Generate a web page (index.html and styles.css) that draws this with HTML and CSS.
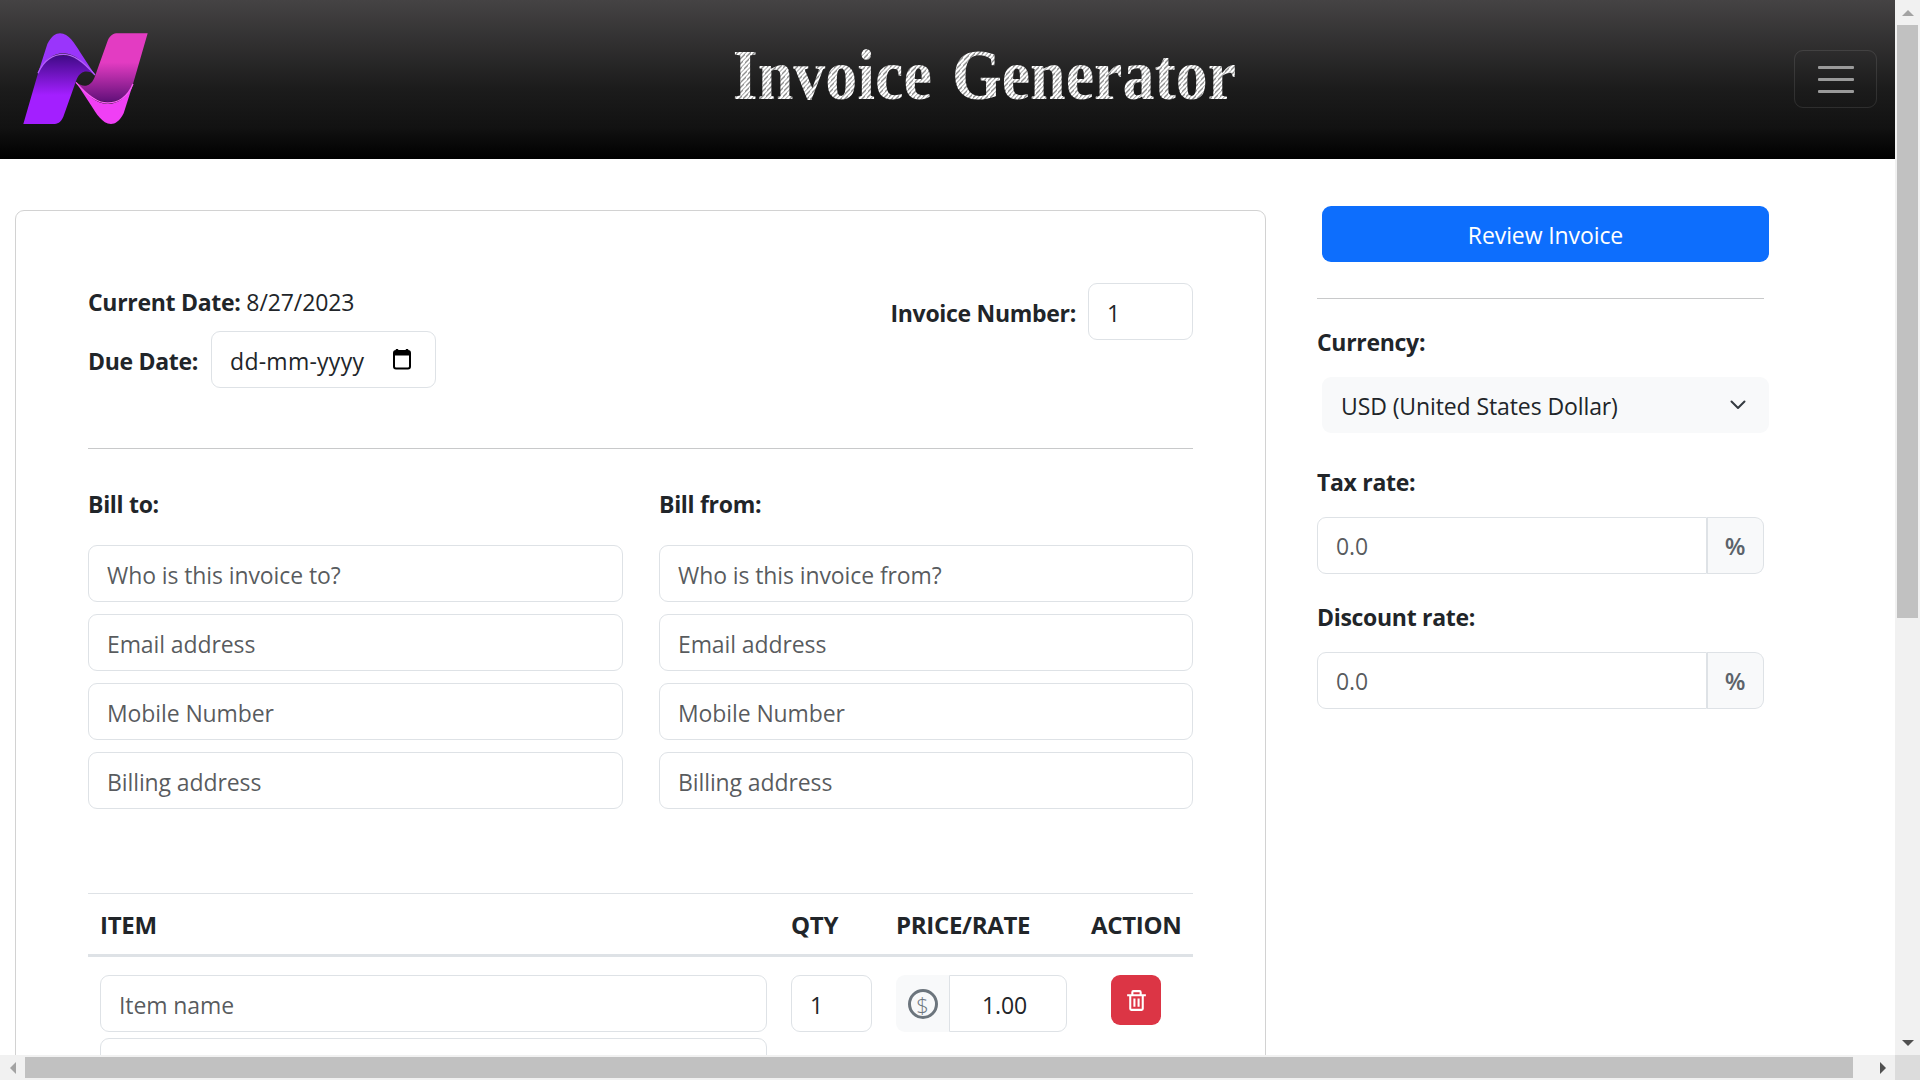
FILE: index.html
```html
<!DOCTYPE html>
<html lang="en">
<head>
<meta charset="utf-8">
<title>Invoice Generator</title>
<link rel="stylesheet" href="styles.css">
</head>
<body>
<div class="window">
  <div class="viewport">
    <header class="topbar">
      <svg class="logo" viewBox="0 0 450 360" aria-label="Logo">
        <defs>
          <linearGradient id="pFront" gradientUnits="userSpaceOnUse" x1="0" y1="105" x2="0" y2="225">
            <stop offset="0" stop-color="#3f0a85"/><stop offset="1" stop-color="#a31fff"/>
          </linearGradient>
          <linearGradient id="mFront" gradientUnits="userSpaceOnUse" x1="0" y1="105" x2="0" y2="225">
            <stop offset="0" stop-color="#5f0f78"/><stop offset="1" stop-color="#e33cc2"/>
          </linearGradient>
        </defs>
        <path fill="#9a35fb" d="M84 160 L112 72 C124 48 138 40 150 40 C176 40 195 72 210 96 L255 165 C225 130 195 100 160 100 C130 100 100 120 84 160 Z"/>
        <path fill="url(#pFront)" d="M40 312 L84 160 C100 122 130 106 160 106 C195 106 225 132 255 165 C232 148 212 152 200 178 L160 290 C152 308 142 312 130 312 Z"/>
        <path fill="none" stroke="#b45cff" stroke-width="4" d="M84 160 C100 120 130 103 160 103 C195 103 225 130 255 165"/>
        <g transform="rotate(180 226.5 176)">
          <path fill="#f03ff5" d="M84 160 L112 72 C124 48 138 40 150 40 C176 40 195 72 210 96 L255 165 C225 130 195 100 160 100 C130 100 100 120 84 160 Z"/>
          <path fill="url(#mFront)" d="M40 312 L84 160 C100 122 130 106 160 106 C195 106 225 132 255 165 C232 148 212 152 200 178 L160 290 C152 308 142 312 130 312 Z"/>
          <path fill="none" stroke="#fb5cf8" stroke-width="4" d="M84 160 C100 120 130 103 160 103 C195 103 225 130 255 165"/>
        </g>
      </svg>
      <h1 class="brand-title">Invoice Generator</h1>
      <button class="toggler" type="button" aria-label="Toggle navigation">
        <span class="toggler-bar"></span><span class="toggler-bar"></span><span class="toggler-bar"></span>
      </button>
    </header>

    <main class="layout">
      <section class="card">
        <div class="meta-row">
          <div class="meta-dates">
            <div class="current-date"><strong>Current Date:</strong> 8/27/2023</div>
            <div class="inline-field">
              <strong>Due Date:</strong>
              <div class="control date-control"><span class="date-text">dd-mm-yyyy</span>
                <svg class="calendar" viewBox="0 0 20 22"><path d="M5 1v3M15 1v3" stroke="#000" stroke-width="2.4" fill="none"/><rect x="2" y="3" width="16" height="17.5" rx="2" fill="none" stroke="#000" stroke-width="2"/><rect x="2" y="3" width="16" height="4.5" fill="#000"/></svg>
              </div>
            </div>
          </div>
          <div class="inline-field">
            <strong>Invoice Number:</strong>
            <input class="control invoice-no" type="text" value="1">
          </div>
        </div>

        <hr class="rule meta-rule">

        <div class="parties">
          <div class="party">
            <strong class="party-title">Bill to:</strong>
            <input class="control" type="text" placeholder="Who is this invoice to?">
            <input class="control" type="text" placeholder="Email address">
            <input class="control" type="text" placeholder="Mobile Number">
            <input class="control" type="text" placeholder="Billing address">
          </div>
          <div class="party">
            <strong class="party-title">Bill from:</strong>
            <input class="control" type="text" placeholder="Who is this invoice from?">
            <input class="control" type="text" placeholder="Email address">
            <input class="control" type="text" placeholder="Mobile Number">
            <input class="control" type="text" placeholder="Billing address">
          </div>
        </div>

        <table class="items">
          <colgroup><col class="col-item"><col class="col-qty"><col class="col-price"><col class="col-action"></colgroup>
          <thead>
            <tr><th>ITEM</th><th>QTY</th><th>PRICE/RATE</th><th>ACTION</th></tr>
          </thead>
          <tbody>
            <tr>
              <td>
                <input class="control" type="text" placeholder="Item name">
                <input class="control item-desc" type="text">
              </td>
              <td><input class="control" type="text" value="1"></td>
              <td>
                <div class="group">
                  <span class="addon dollar-addon"><span class="dollar">$</span></span>
                  <input class="control group-input price-input" type="text" value="1.00">
                </div>
              </td>
              <td>
                <button class="delete" type="button" aria-label="Delete item">
                  <svg class="trash" viewBox="0 0 24 24" fill="#fff"><path d="M5 20a2 2 0 0 0 2 2h10a2 2 0 0 0 2-2V8h2V6h-4V4a2 2 0 0 0-2-2H9a2 2 0 0 0-2 2v2H3v2h2zM9 4h6v2H9zM8 8h9v12H7V8z"/><path d="M9 10h2v8H9zm4 0h2v8h-2z"/></svg>
                </button>
              </td>
            </tr>
          </tbody>
        </table>
      </section>

      <aside class="sidebar">
        <button class="primary" type="button">Review Invoice</button>
        <hr class="rule side-rule">
        <label class="side-label currency-label">Currency:</label>
        <div class="select-box"><span>USD (United States Dollar)</span>
          <svg class="chevron" viewBox="0 0 16 10"><path d="M1.5 1.5 8 8l6.5-6.5" fill="none" stroke="#343a40" stroke-width="2" stroke-linecap="round" stroke-linejoin="round"/></svg>
        </div>
        <label class="side-label tax-label">Tax rate:</label>
        <div class="group">
          <input class="control group-input-left" type="text" placeholder="0.0">
          <span class="addon percent">%</span>
        </div>
        <label class="side-label discount-label">Discount rate:</label>
        <div class="group">
          <input class="control group-input-left" type="text" placeholder="0.0">
          <span class="addon percent">%</span>
        </div>
      </aside>
    </main>
  </div>

  <div class="vbar">
    <div class="arrow-box"><span class="tri tri-up"></span></div>
    <div class="vthumb"></div>
    <div class="arrow-box arrow-end"><span class="tri tri-down"></span></div>
  </div>
  <div class="hbar">
    <div class="arrow-box"><span class="tri tri-left"></span></div>
    <div class="hthumb"></div>
    <div class="arrow-box arrow-end"><span class="tri tri-right"></span></div>
  </div>
  <div class="corner"></div>
</div>
</body>
</html>
```
FILE: styles.css
```css
* { box-sizing: border-box; }
html, body { margin: 0; height: 100%; overflow: hidden; }
body {
  font-family: "Open Sans", "Noto Sans", sans-serif;
  font-stretch: 92%;
  font-size: 23px;
  line-height: 36px;
  letter-spacing: -.1px;
  color: #212529;
  background: #fff;
}
strong { font-weight: 700; letter-spacing: -.3px; }

.window {
  display: grid;
  grid-template-columns: 1895px 25px;
  grid-template-rows: 1055px 25px;
  height: 100vh;
  overflow: hidden;
}
.viewport { overflow: hidden; }

/* header */
.topbar {
  height: 159px;
  display: flex;
  align-items: center;
  justify-content: space-between;
  padding: 0 18px 0 10px;
  background: linear-gradient(180deg, #454344 0%, #1c1c1c 55%, #121212 80%, #000 100%);
}
.logo { width: 150px; height: 120px; flex: none; }
.brand-title {
  margin: 0 0 10px 15px;
  font-family: "Liberation Serif", serif;
  font-stretch: normal;
  font-weight: 700;
  font-size: 64px;
  line-height: 80px;
  letter-spacing: 0;
  word-spacing: 4px;
  color: #fff;
  background: repeating-linear-gradient(135deg, #fff 0 2px, #8f8f8f 2px 3px);
  -webkit-background-clip: text;
  background-clip: text;
  -webkit-text-fill-color: transparent;
  transform: scaleY(1.13);
}
.toggler {
  width: 83px;
  height: 58px;
  margin-top: -1px;
  display: flex;
  flex-direction: column;
  align-items: center;
  justify-content: center;
  gap: 9px;
  padding: 0;
  background: transparent;
  border: 1px solid rgba(255, 255, 255, .1);
  border-radius: 9px;
}
.toggler-bar { width: 36px; height: 3px; background: #9a9a9a; border-radius: 1px; }

/* layout */
.layout {
  display: flex;
  align-items: flex-start;
  padding: 47px 0 0 15px;
}
.card {
  width: 1251px;
  flex: none;
  margin-top: 4px;
  padding: 72px 72px 48px;
  border: 1px solid #d2d2d2;
  border-radius: 9px;
}
.sidebar {
  width: 447px;
  flex: none;
  margin-left: 51px;
  display: flex;
  flex-direction: column;
  align-items: stretch;
}

/* controls */
.control {
  display: block;
  width: 100%;
  height: 57px;
  padding: 2px 18px 0;
  font: inherit;
  letter-spacing: inherit;
  color: #212529;
  background: #fff;
  border: 1px solid #dee2e6;
  border-radius: 9px;
  outline: none;
}
.control::placeholder { color: rgba(33, 37, 41, .75); opacity: 1; }

.meta-row { display: flex; justify-content: space-between; align-items: flex-start; }
.current-date { padding-top: 1px; margin-bottom: 11px; }
.inline-field { display: flex; align-items: center; gap: 12px; }
.inline-field strong { padding-top: 3px; }
.date-control {
  width: 225px;
  margin-left: 1px;
  display: flex;
  align-items: center;
  justify-content: space-between;
  padding-right: 23px;
}
.date-text { letter-spacing: .25px; }
.calendar { width: 20px; height: 22px; flex: none; margin-top: -3px; }
.invoice-no { width: 105px; }

.rule { margin: 0; border: 0; border-top: 1px solid #c8c9ca; }
.meta-rule { margin-top: 60px; }

.parties { display: grid; grid-template-columns: 535px 534px; column-gap: 36px; margin-top: 37px; }
.party { display: flex; flex-direction: column; gap: 12px; }
.party-title { display: block; margin-bottom: 11px; }

/* table */
.items {
  width: 1105px;
  margin-top: 84px;
  table-layout: fixed;
  border-collapse: collapse;
}
.col-item { width: 691px; }
.col-qty { width: 105px; }
.col-price { width: 195px; }
.col-action { width: 114px; }
.items th {
  height: 62px;
  padding: 2px 12px 0;
  text-align: left;
  font-size: 24px;
  font-weight: 700;
  letter-spacing: -.3px;
  border-top: 1px solid #dee2e6;
  border-bottom: 3px solid #dee2e6;
}
.items td { padding: 18px 12px 0; vertical-align: top; }
.item-desc { margin-top: 6px; }

/* input group */
.group { display: flex; width: 100%; }
.addon {
  display: flex;
  align-items: center;
  justify-content: center;
  flex: none;
  background: #f8f9fa;
  border: 1px solid #dee2e6;
}
.dollar-addon { width: 53px; border: 0; border-radius: 9px 0 0 9px; }
.dollar {
  width: 30px;
  height: 30px;
  display: flex;
  align-items: center;
  justify-content: center;
  border: 3px solid #6c757d;
  border-radius: 50%;
  font-size: 22px;
  font-weight: 300;
  line-height: 1;
  letter-spacing: 0;
  color: #6c757d;
}
.group-input { flex: 1; min-width: 0; border-radius: 0 9px 9px 0; }
.price-input { padding-left: 32px; }
.group-input-left { flex: 1; min-width: 0; padding-top: 0; border-radius: 9px 0 0 9px; }
.percent {
  width: 57px;
  border-left: 0;
  box-shadow: inset 1px 0 0 #dee2e6;
  border-radius: 0 9px 9px 0;
  font-size: 24px;
  font-weight: 600;
  color: #5c636a;
}

.delete {
  width: 50px;
  height: 50px;
  margin-left: 20px;
  display: flex;
  align-items: center;
  justify-content: center;
  padding: 0;
  background: #dc3545;
  border: 0;
  border-radius: 9px;
}
.trash { width: 25px; height: 25px; }

/* sidebar */
.primary {
  width: 447px;
  height: 56px;
  margin-left: 5px;
  padding: 2px 0 0;
  font: inherit;
  letter-spacing: inherit;
  color: #fff;
  background: #0d6efd;
  border: 0;
  border-radius: 9px;
}
.side-rule { margin-top: 36px; }
.side-label { display: block; font-weight: 700; letter-spacing: -.3px; margin-bottom: 17px; }
.currency-label { margin-top: 25px; }
.tax-label { margin-top: 31px; }
.discount-label { margin-top: 25px; }
.select-box {
  width: 447px;
  height: 56px;
  margin-left: 5px;
  display: flex;
  align-items: center;
  justify-content: space-between;
  padding: 2px 23px 0 19px;
  background: #f8f9fa;
  border-radius: 9px;
}
.chevron { width: 16px; height: 10px; flex: none; margin-top: -2px; }

/* scrollbars */
.vbar { display: flex; flex-direction: column; background: #f1f1f1; }
.hbar { display: flex; background: #f1f1f1; }
.arrow-box { width: 25px; height: 25px; flex: none; display: flex; align-items: center; justify-content: center; }
.arrow-end { margin-left: auto; margin-top: auto; }
.vthumb { height: 593px; margin: 0 2px; background: #c1c1c1; flex: none; }
.hthumb { width: 1828px; margin: 2px 0; background: #c1c1c1; flex: none; }
.corner { background: #dcdcdc; }
.tri { width: 0; height: 0; border-style: solid; border-color: transparent; }
.tri-up { border-width: 0 6px 6px; border-bottom-color: #a3a3a3; }
.tri-down { border-width: 6px 6px 0; border-top-color: #505050; }
.tri-left { border-width: 6px 6px 6px 0; border-right-color: #a3a3a3; }
.tri-right { border-width: 6px 0 6px 6px; border-left-color: #505050; }
```
